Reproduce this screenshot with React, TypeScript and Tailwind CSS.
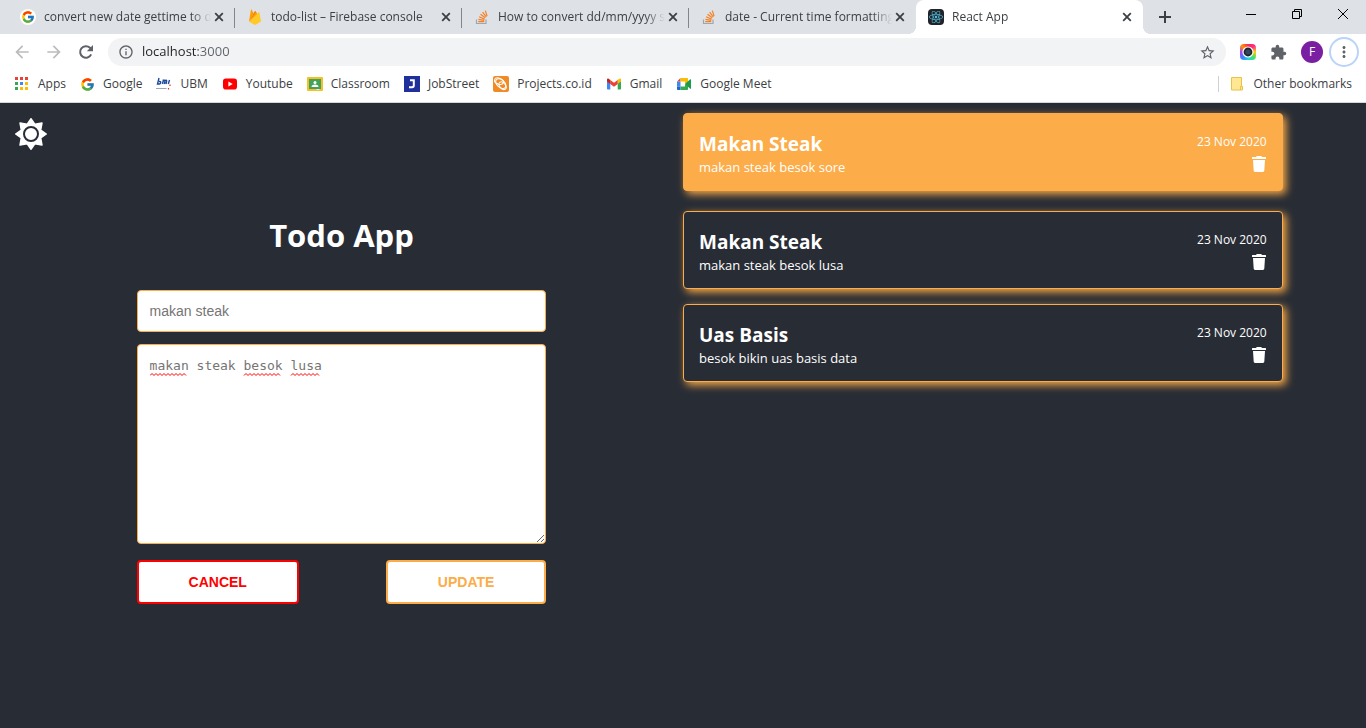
import type { ReactNode } from "react";
import { FcGoogle } from "react-icons/fc";
import { FaReact } from "react-icons/fa";
import {
  MdArrowBack,
  MdArrowForward,
  MdExtension,
  MdInfoOutline,
  MdMoreVert,
  MdStarBorder,
} from "react-icons/md";

/* ---------- favicons ---------- */

function GoogleBadge() {
  return (
    <span className="flex size-4 items-center justify-center rounded-full bg-white">
      <FcGoogle size={14} />
    </span>
  );
}

function FirebaseIcon() {
  return (
    <svg viewBox="0 0 16 16" className="size-4" aria-hidden="true">
      <path d="M2 12.6 3.9.9c.1-.4.6-.5.8-.1l2 3.8z" fill="#ffa000" />
      <path d="M2 12.6 11.6 3.2c.3-.3.7-.1.8.2L14 12.6l-5.400 3.100c-.4.2-.8.2-1.200 0z" fill="#ffca28" />
      <path d="M2 12.600 7.800 2.300c.2-.3.6-.3.8 0l1.300 2.500z" fill="#f57c00" />
      <path d="m2 12.600 6.700-6.500 1.200-1.300L9 3z" fill="#ffa000" />
    </svg>
  );
}

function StackOverflowIcon() {
  return (
    <svg viewBox="0 0 16 16" className="size-4" fill="none" aria-hidden="true">
      <path d="M2.500 10.500v4h9.500v-4" stroke="#9fa6ad" strokeWidth="1.200" />
      <path
        d="M4.200 12.600h6M4.400 10.300l5.900 1M5.100 7.800l5.500 2.300M6.500 5.300l4.800 3.500M8.600 3.200l3.700 4.600M11.300 1.600l1.800 5.500"
        stroke="#f48024"
        strokeWidth="1.200"
      />
    </svg>
  );
}

function ReactBadge() {
  return (
    <span className="flex size-4 items-center justify-center rounded-sm bg-[#20232a]">
      <FaReact size={14} color="#53c1de" />
    </span>
  );
}

function AppsIcon() {
  const colors = ["#ea4335", "#ea4335", "#ea4335", "#34a853", "#4285f4", "#fbbc04", "#34a853", "#fbbc04", "#fbbc04"];
  return (
    <svg viewBox="0 0 16 16" className="size-4" aria-hidden="true">
      {colors.map((color, i) => (
        <rect key={i} x={1 + (i % 3) * 5} y={1 + Math.floor(i / 3) * 5} width="3" height="3" fill={color} />
      ))}
    </svg>
  );
}

function UbmIcon() {
  return (
    <svg viewBox="0 0 16 16" className="size-4" fill="none" aria-hidden="true">
      <path
        d="M3 2 1.500 8h2c1.500 0 2-3-.5-2.500M7.500 3.500 6.500 8M7.300 5c1-1.300 2-1 1.600.5L8.400 8m.5-3c1-1.300 2.100-1 1.700.5L10 8M13.500 4l-1.200 4"
        stroke="#1d4a9c"
        strokeWidth="1.400"
      />
      <path d="M0 12.500h10.500" stroke="#9ea6b4" />
      <path d="M14 8.500v1.500M12.500 12v1.500" stroke="#e0352f" strokeWidth="1.200" />
    </svg>
  );
}

function YoutubeIcon() {
  return (
    <svg viewBox="0 0 16 16" className="size-4" aria-hidden="true">
      <rect x="1" y="2.500" width="14" height="11" rx="2.800" fill="#f00" />
      <path d="m6.400 5.500 4.300 2.500-4.300 2.500z" fill="#fff" />
    </svg>
  );
}

function ClassroomIcon() {
  return (
    <svg viewBox="0 0 16 16" className="size-4" aria-hidden="true">
      <rect y="1" width="16" height="14" rx="1" fill="#f6bf26" />
      <rect x="2" y="3" width="12" height="10" fill="#43a15a" />
      <circle cx="8" cy="6.400" r="1.500" fill="#fff" />
      <path d="M4.500 11c0-1.600 2-2.400 3.500-2.400s3.500.8 3.500 2.400z" fill="#fff" />
      <path d="M9.500 13h3v1h-3z" fill="#e8eaed" />
    </svg>
  );
}

function JobStreetIcon() {
  return (
    <svg viewBox="0 0 16 16" className="size-4" fill="none" aria-hidden="true">
      <rect width="16" height="16" fill="#20309b" />
      <path d="M6 4.200h3.800v5.300c0 1.200-.8 1.800-1.800 1.800H5" stroke="#fff" strokeWidth="2" />
    </svg>
  );
}

function ProjectsIcon() {
  return (
    <svg viewBox="0 0 16 16" className="size-4" fill="none" aria-hidden="true">
      <rect width="16" height="16" rx="2" fill="#f08a24" />
      <g stroke="#fff" strokeWidth="1">
        <ellipse cx="6" cy="5.200" rx="4.600" ry="3" transform="rotate(20 6 5.200)" />
        <ellipse cx="7.800" cy="7.600" rx="6" ry="3.800" transform="rotate(42 7.800 7.600)" />
        <ellipse cx="9.600" cy="9.800" rx="4.400" ry="2.800" transform="rotate(50 9.600 9.800)" />
      </g>
    </svg>
  );
}

function GmailIcon() {
  return (
    <svg viewBox="0 0 16 16" className="size-4" aria-hidden="true">
      <path d="M1 4.500v8c0 .6.4 1 1 1h2.300V7z" fill="#4285f4" />
      <path d="M15 4.500v8c0 .6-.4 1-1 1h-2.300V7z" fill="#34a853" />
      <path d="M11.700 4 13.300 2.800c.8-.5 1.700 0 1.700 1V5.400l-3.300 2.500z" fill="#fbbc04" />
      <path d="M4.300 7.900V4L8 6.800 11.700 4v3.900L8 10.700z" fill="#ea4335" />
      <path d="M1 3.800c0-1 .9-1.500 1.700-1L4.300 4v3.900L1 5.400z" fill="#c5221f" />
    </svg>
  );
}

function MeetIcon() {
  return (
    <svg viewBox="0 0 16 16" className="size-4" aria-hidden="true">
      <path d="M4.500 2v3.500H1z" fill="#ea4335" />
      <path d="M1 5.500h3.500v5H1z" fill="#4285f4" />
      <path d="M1 10.500h3.500V14H2c-.6 0-1-.4-1-1z" fill="#1967d2" />
      <path d="M4.500 2H11c.6 0 1 .4 1 1v3.500L9 8V5.500H4.500z" fill="#fbbc04" />
      <path d="M4.500 10.500H9V8l3 2v3c0 .6-.4 1-1 1H4.500z" fill="#34a853" />
      <path d="m9 8 5.200-4.700c.4-.3.800-.1.800.4v8.600c0 .5-.4.7-.8.4z" fill="#1e9a48" />
    </svg>
  );
}

function FolderIcon() {
  return (
    <svg viewBox="0 0 16 16" className="size-4" aria-hidden="true">
      <path d="M2.500 1.500h10v9h1v3.500H2.500z" fill="#ffe794" stroke="#e9c346" />
      <path d="M11.500 14v-3.500h2" fill="none" stroke="#e9c346" />
    </svg>
  );
}

function CameraExtensionIcon() {
  return (
    <span className="flex size-4 items-center justify-center rounded-sm bg-[conic-gradient(#ff2a4a,#ff2a8a,#ffd000,#40e070,#20d0e0,#3f80ff,#b040ff,#ff9000,#ff2a4a)]">
      <svg viewBox="0 0 14 14" className="size-3.5" aria-hidden="true">
        <circle cx="7" cy="7" r="5.600" fill="#fff" />
        <circle cx="7" cy="7" r="4.400" fill="#20242c" />
        <circle cx="7" cy="7" r="2.600" fill="#33475c" />
      </svg>
    </span>
  );
}

/* ---------- control icons ---------- */

function CloseIcon() {
  return (
    <svg viewBox="0 0 10 10" className="size-2.5" stroke="currentColor" strokeWidth="1.800" aria-hidden="true">
      <path d="m1.200 1.200 7.600 7.600M8.800 1.200 1.200 8.800" />
    </svg>
  );
}

function PlusIcon() {
  return (
    <svg viewBox="0 0 12 12" className="size-3" stroke="currentColor" strokeWidth="2" aria-hidden="true">
      <path d="M6 0v12M0 6h12" />
    </svg>
  );
}

function ReloadIcon() {
  return (
    <svg viewBox="0 0 20 20" className="size-5" aria-hidden="true">
      <path d="M15.200 12.400a5.800 5.800 0 1 1-1.200-6.600l1.500 1.500" fill="none" stroke="currentColor" strokeWidth="2" />
      <path d="M17 3v6.200h-6.200z" fill="currentColor" />
    </svg>
  );
}

/* ---------- browser chrome ---------- */

interface TabData {
  title: string;
  icon: ReactNode;
  active?: boolean;
  divider?: boolean;
}

const tabs: TabData[] = [
  { title: "convert new date gettime to da", icon: <GoogleBadge />, divider: true },
  { title: "todo-list – Firebase console", icon: <FirebaseIcon />, divider: true },
  { title: "How to convert dd/mm/yyyy st", icon: <StackOverflowIcon />, divider: true },
  { title: "date - Current time formatting", icon: <StackOverflowIcon /> },
  { title: "React App", icon: <ReactBadge />, active: true },
];

function Tab({ title, icon, active, divider }: TabData) {
  return (
    <div
      className={
        active
          ? "relative flex h-full w-[227px] items-center rounded-t-lg bg-white pr-2 pl-3"
          : "relative flex h-full w-[227px] items-center pr-2 pl-3"
      }
    >
      {icon}
      <span className="ml-2 flex-1 overflow-hidden mask-r-from-[calc(100%-20px)] whitespace-nowrap">{title}</span>
      <button type="button" aria-label={`Close ${title}`} className="flex size-4 items-center justify-center text-[#3c4043]">
        <CloseIcon />
      </button>
      {divider && <span className="absolute top-2 right-0 h-5 w-px bg-[#80868b]" />}
      {active && (
        <>
          <span className="absolute bottom-0 -left-2 size-2 bg-[radial-gradient(circle_at_0_0,transparent_8px,#ffffff_8px)]" />
          <span className="absolute -right-2 bottom-0 size-2 bg-[radial-gradient(circle_at_100%_0,transparent_8px,#ffffff_8px)]" />
        </>
      )}
    </div>
  );
}

function TabStrip() {
  return (
    <div className="flex h-[34px] items-center bg-[#dee1e6] pl-2">
      {tabs.map((tab) => (
        <Tab key={tab.title} {...tab} />
      ))}
      <button type="button" aria-label="New tab" className="ml-3 flex size-5 items-center justify-center text-[#3c4043]">
        <PlusIcon />
      </button>
      <div className="ml-auto flex self-start text-black">
        <button type="button" aria-label="Minimize" className="flex h-7 w-[46px] items-center justify-center">
          <svg viewBox="0 0 10 10" className="size-2.5" aria-hidden="true">
            <path d="M0 5.500h10" stroke="currentColor" />
          </svg>
        </button>
        <button type="button" aria-label="Restore" className="flex h-7 w-[46px] items-center justify-center">
          <svg viewBox="0 0 10 10" className="size-2.5" fill="none" stroke="currentColor" aria-hidden="true">
            <path d="M.5 2.500h7v7h-7zM2.500 2.500v-2h7v7h-2" />
          </svg>
        </button>
        <button type="button" aria-label="Close window" className="flex h-7 w-[46px] items-center justify-center">
          <svg viewBox="0 0 10 10" className="size-2.5" stroke="currentColor" aria-hidden="true">
            <path d="m0 0 10 10M10 0 0 10" />
          </svg>
        </button>
      </div>
    </div>
  );
}

function Toolbar() {
  return (
    <div className="flex h-9 items-center bg-white pr-[7px] pl-3 text-[#5f6368]">
      <button type="button" aria-label="Back" className="flex w-8 text-[#babcbe]">
        <MdArrowBack size={20} />
      </button>
      <button type="button" aria-label="Forward" className="flex w-8 text-[#babcbe]">
        <MdArrowForward size={20} />
      </button>
      <button type="button" aria-label="Reload" className="flex w-8">
        <ReloadIcon />
      </button>
      <div className="flex h-7 flex-1 items-center rounded-full bg-[#f1f3f4] px-2.5">
        <MdInfoOutline size={16} />
        <input
          type="text"
          aria-label="Address"
          defaultValue="localhost:3000"
          className="ml-2 flex-1 bg-linear-to-r from-[#202124] from-[56px] to-[#5f6368] to-[56px] bg-clip-text text-[13px] text-transparent caret-black outline-none"
        />
        <button type="button" aria-label="Bookmark this page" className="flex">
          <MdStarBorder size={17} />
        </button>
      </div>
      <div className="ml-3.5 flex items-center gap-3.5">
        <CameraExtensionIcon />
        <button type="button" aria-label="Extensions" className="flex">
          <MdExtension size={17} />
        </button>
        <button
          type="button"
          aria-label="Profile"
          className="flex size-[22px] items-center justify-center rounded-full bg-[#7b1fa2] text-xs text-white"
        >
          F
        </button>
      </div>
      <button
        type="button"
        aria-label="Menu"
        className="ml-1.5 flex size-[30px] items-center justify-center rounded-full border-2 border-[#b9d3fb]"
      >
        <MdMoreVert size={18} />
      </button>
    </div>
  );
}

const bookmarks: { label: string; icon: ReactNode }[] = [
  { label: "Apps", icon: <AppsIcon /> },
  { label: "Google", icon: <FcGoogle size={15} /> },
  { label: "UBM", icon: <UbmIcon /> },
  { label: "Youtube", icon: <YoutubeIcon /> },
  { label: "Classroom", icon: <ClassroomIcon /> },
  { label: "JobStreet", icon: <JobStreetIcon /> },
  { label: "Projects.co.id", icon: <ProjectsIcon /> },
  { label: "Gmail", icon: <GmailIcon /> },
  { label: "Google Meet", icon: <MeetIcon /> },
];

function BookmarksBar() {
  return (
    <nav className="flex h-[33px] items-center gap-3.5 border-b border-[#d5d7db] bg-white px-3.5 pb-1">
      {bookmarks.map(({ label, icon }) => (
        <a key={label} href="#" className="flex items-center gap-2 whitespace-nowrap">
          {icon}
          {label}
        </a>
      ))}
      <a href="#" className="ml-auto flex items-center gap-2 border-l border-[#cfd1d4] pl-2.5 whitespace-nowrap">
        <FolderIcon />
        Other bookmarks
      </a>
    </nav>
  );
}

/* ---------- todo app ---------- */

function SunIcon() {
  return (
    <svg viewBox="-16 -16 32 32" className="size-8" aria-hidden="true">
      <path
        d="M0-15.300 4-9.700 11-11 9.700-4 15.300 0 9.700 4 11 11 4 9.700 0 15.300-4 9.700-11 11-9.700 4-15.300 0-9.700-4-11-11-4-9.700z"
        fill="#fff"
        stroke="#fff"
        strokeWidth="1.400"
        strokeLinejoin="round"
      />
      <circle r="7" fill="#fff" stroke="#282c35" strokeWidth="2" />
    </svg>
  );
}

function TrashIcon() {
  return (
    <svg viewBox="0 0 16 16" className="size-4" fill="currentColor" aria-hidden="true">
      <path d="M5.800 0h4.400l.8 1h3.500c.3 0 .5.2.5.500V3H1V1.500c0-.3.2-.5.5-.5H5zM2 4h12l-.7 10.600c0 .8-.6 1.400-1.400 1.400H4.100c-.8 0-1.400-.6-1.400-1.400z" />
    </svg>
  );
}

/* Spell-check squiggles; each pair is a start column and a length in characters. */
function SpellMarks({ words }: { words: [number, number][] }) {
  const advance = 7.83;
  return (
    <svg className="pointer-events-none absolute top-[29px] left-[13px] h-[3px] w-44" fill="none" stroke="#f00" aria-hidden="true">
      {words.map(([start, length]) => {
        const x = Math.round(start * advance);
        const steps = Math.floor((length * advance) / 4);
        return <path key={start} d={`M${x} 2.500${"l2-2 2 2".repeat(steps)}`} />;
      })}
    </svg>
  );
}

interface Todo {
  title: string;
  note: string;
  date: string;
  selected?: boolean;
}

const selectedTodo: Todo = { title: "Makan Steak", note: "makan steak besok sore", date: "23 Nov 2020", selected: true };

const otherTodos: Todo[] = [
  { title: "Makan Steak", note: "makan steak besok lusa", date: "23 Nov 2020" },
  { title: "Uas Basis", note: "besok bikin uas basis data", date: "23 Nov 2020" },
];

function TodoCard({ title, note, date, selected }: Todo) {
  return (
    <article
      className={
        selected
          ? "flex justify-between rounded border border-[#fcac48] bg-[#fcac48] p-[15px] shadow-[3px_3px_8px_#fcac48]"
          : "flex justify-between rounded border border-[#fcac48] bg-[#282c35] p-[15px] shadow-[3px_3px_8px_#fcac48]"
      }
    >
      <div>
        <h2 className="text-[19px] leading-[30px] font-bold">{title}</h2>
        <p className="text-[13px] leading-4">{note}</p>
      </div>
      <div className="flex flex-col items-end gap-0.5">
        <time dateTime="2020-11-23" className="text-xs leading-[25px]">
          {date}
        </time>
        <button type="button" aria-label={`Delete ${title}`} className="flex">
          <TrashIcon />
        </button>
      </div>
    </article>
  );
}

function TodoForm() {
  return (
    <form className="mx-auto flex w-3/5 flex-col" onSubmit={(event) => event.preventDefault()}>
      <h1 className="mt-[46px] text-center text-[31px] leading-12 font-bold">Todo App</h1>
      <input
        type="text"
        aria-label="Title"
        placeholder="makan steak"
        className="mt-[31px] h-[42px] rounded border border-[#fcac48] bg-white px-3 font-['Liberation_Sans',Arial,sans-serif] text-sm text-[#757575] placeholder:text-[#757575]"
      />
      <div className="relative mt-3 flex">
        <textarea
          aria-label="Note"
          spellCheck={false}
          defaultValue="makan steak besok lusa"
          className="h-[200px] flex-1 resize rounded border border-[#fcac48] bg-white px-3 py-3 font-['DejaVu_Sans_Mono',monospace] text-[13px] leading-[18px] text-[#757575]"
        />
        <SpellMarks
          words={[
            [0, 5],
            [12, 5],
            [18, 4],
          ]}
        />
      </div>
      <div className="mt-4 flex justify-between font-['Liberation_Sans',Arial,sans-serif] text-sm font-bold">
        <button type="button" className="h-11 rounded border-2 border-[#f00] bg-white px-[50px] text-[#f00]">
          CANCEL
        </button>
        <button type="submit" className="h-11 rounded border-2 border-[#fcac48] bg-white px-[50px] text-[#fcac48]">
          UPDATE
        </button>
      </div>
    </form>
  );
}

export default function App() {
  return (
    <div className="flex min-h-screen flex-col font-['Open_Sans','Noto_Sans',sans-serif]">
      <header className="text-xs text-[#3c4043]">
        <TabStrip />
        <Toolbar />
        <BookmarksBar />
      </header>
      <main className="grid flex-1 grid-cols-2 bg-[#282c35] text-white">
        <section>
          <button type="button" aria-label="Toggle theme" className="m-[15px] flex">
            <SunIcon />
          </button>
          <TodoForm />
        </section>
        <section className="w-[87.8%] pt-2.5">
          <TodoCard {...selectedTodo} />
          <div className="mt-5 flex flex-col gap-[15px]">
            {otherTodos.map((todo) => (
              <TodoCard key={todo.title} {...todo} />
            ))}
          </div>
        </section>
      </main>
    </div>
  );
}
